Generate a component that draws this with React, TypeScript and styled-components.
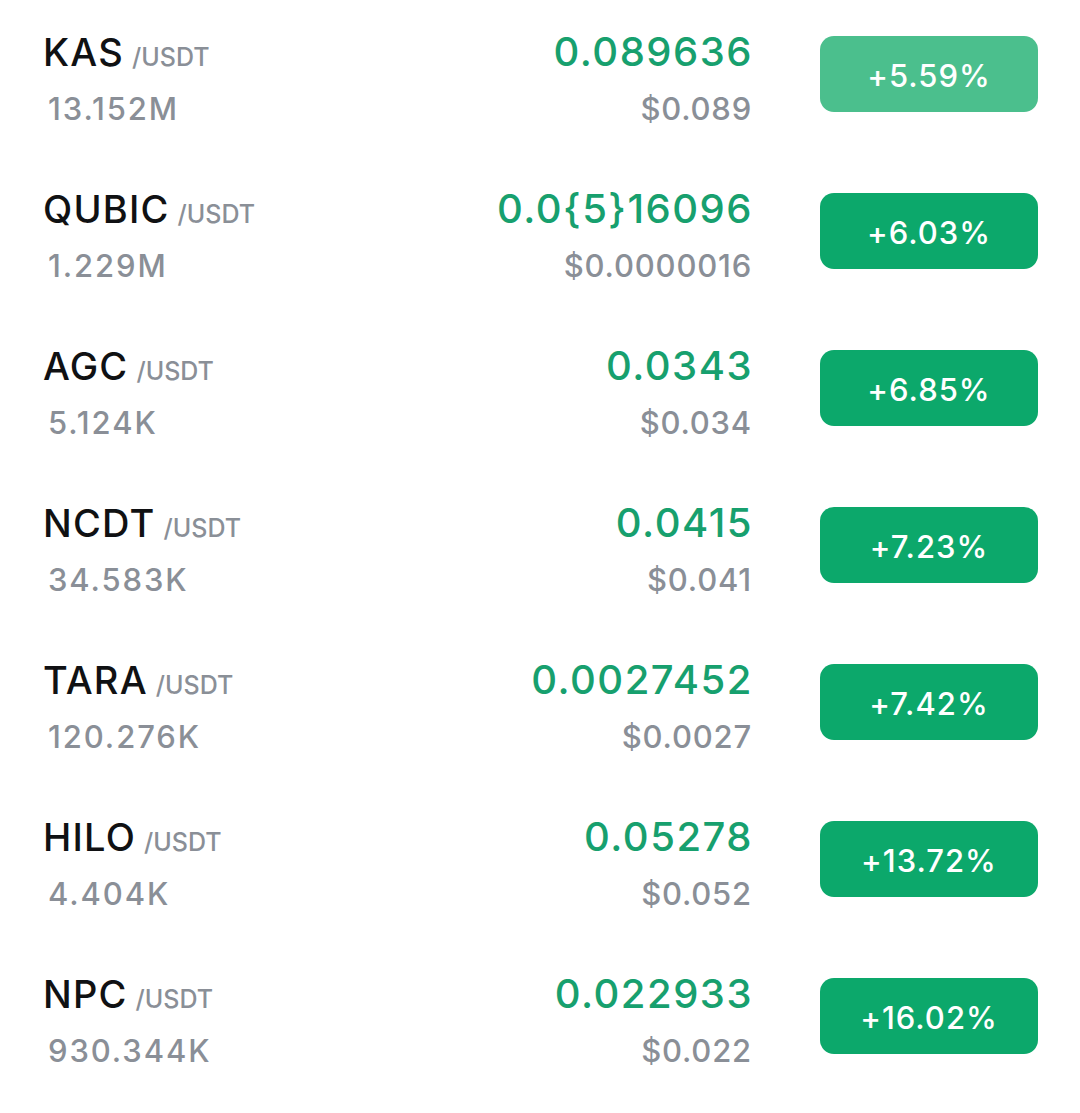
import React from "react"
import styled, { createGlobalStyle } from "styled-components"

const GlobalStyle = createGlobalStyle`
    html, body {
        margin: 0;
        padding: 0;
        background: #ffffff;
    }
    body {
        font-family: Inter, "Noto Sans", "Liberation Sans", sans-serif;
        -webkit-font-smoothing: antialiased;
    }
`

const List = styled.div`
    display: flex;
    flex-direction: column;
    width: 1080px;
`

const Row = styled.div`
    display: grid;
    grid-template-columns: 1fr auto 218px;
    column-gap: 69px;
    align-items: start;
    height: 157px;
    padding: 30px 42px 0 43px;
    box-sizing: border-box;
`

const Col = styled.div<{ $right?: boolean }>`
    display: flex;
    flex-direction: column;
    gap: 17px;
    align-items: ${({ $right }) => ($right ? "flex-end" : "flex-start")};
`

const Pair = styled.div`
    display: flex;
    align-items: baseline;
    height: 44px;
    line-height: 44px;
`

const Symbol = styled.span`
    font-size: 38px;
    font-weight: 450;
    color: #101113;
    letter-spacing: 1.2px;
`

const Quote = styled.span`
    font-size: 25px;
    font-weight: 450;
    color: #8a8f97;
    margin-left: 8px;
`

const Volume = styled.div`
    font-size: 31px;
    font-weight: 480;
    line-height: 36px;
    color: #8a8f97;
    padding-left: 5px;
    letter-spacing: 1.9px;
`

const Price = styled.div`
    font-size: 40px;
    font-weight: 450;
    line-height: 44px;
    color: #17a06e;
    letter-spacing: 1.5px;
    margin-right: -2px;
`

const Fiat = styled.div`
    font-size: 31px;
    font-weight: 480;
    line-height: 36px;
    color: #8a8f97;
    letter-spacing: 0.8px;
    margin-right: -1px;
`

const Badge = styled.div<{ $soft?: boolean }>`
    display: flex;
    align-items: center;
    justify-content: center;
    margin-top: 6px;
    height: 76px;
    border-radius: 14px;
    background: ${({ $soft }) => ($soft ? "#4bbf8d" : "#0ca86b")};
    color: #ffffff;
    font-size: 31px;
    font-weight: 450;
    letter-spacing: 1px;
    padding-top: 3px;
    box-sizing: border-box;
`

type Ticker = {
    symbol: string
    volume: string
    price: string
    fiat: string
    change: string
    soft?: boolean
}

const tickers: Ticker[] = [
    { symbol: "KAS", volume: "13.152M", price: "0.089636", fiat: "$0.089", change: "+5.59%", soft: true },
    { symbol: "QUBIC", volume: "1.229M", price: "0.0{5}16096", fiat: "$0.0000016", change: "+6.03%" },
    { symbol: "AGC", volume: "5.124K", price: "0.0343", fiat: "$0.034", change: "+6.85%" },
    { symbol: "NCDT", volume: "34.583K", price: "0.0415", fiat: "$0.041", change: "+7.23%" },
    { symbol: "TARA", volume: "120.276K", price: "0.0027452", fiat: "$0.0027", change: "+7.42%" },
    { symbol: "HILO", volume: "4.404K", price: "0.05278", fiat: "$0.052", change: "+13.72%" },
    { symbol: "NPC", volume: "930.344K", price: "0.022933", fiat: "$0.022", change: "+16.02%" },
]

export default function App() {
    return (
        <>
            <GlobalStyle />
            <List>
                {tickers.map((t) => (
                    <Row key={t.symbol}>
                        <Col>
                            <Pair>
                                <Symbol>{t.symbol}</Symbol>
                                <Quote>/USDT</Quote>
                            </Pair>
                            <Volume>{t.volume}</Volume>
                        </Col>
                        <Col $right>
                            <Price>{t.price}</Price>
                            <Fiat>{t.fiat}</Fiat>
                        </Col>
                        <Badge $soft={t.soft}>{t.change}</Badge>
                    </Row>
                ))}
            </List>
        </>
    )
}
